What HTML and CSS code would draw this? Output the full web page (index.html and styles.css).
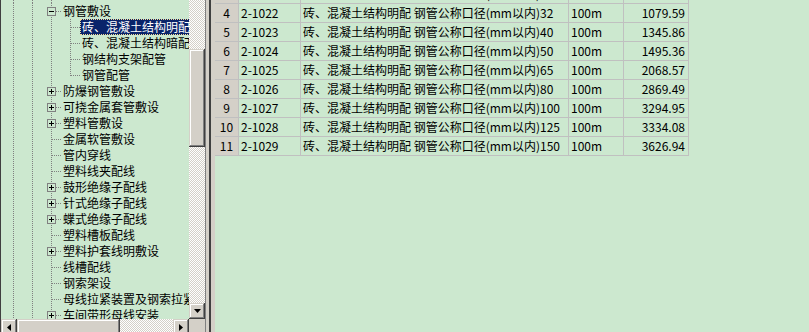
FILE: index.html
```html
<!DOCTYPE html>
<html lang="zh-CN">

<head>
    <meta charset="UTF-8" />
    <meta name="viewport" content="width=device-width, initial-scale=1.0" />
    <title>定额库</title>
    <link rel="stylesheet" href="styles.css">
</head>

<body>
    <div class="app">
        <!-- 左侧: 章节树 -->
        <div class="tree-pane">
            <div class="tree-body">
                <div class="tree">
                    <div class="node spacer"><i class="guide"></i><i class="guide"></i><i class="guide"></i></div>
                    <div class="node"><i class="guide"></i><i class="guide"></i><i class="joint"><b class="box"></b></i><span class="label">钢管敷设</span></div>
                    <div class="node"><i class="guide"></i><i class="guide"></i><i class="guide"></i><i class="joint"></i><span class="label selected">砖、混凝土结构明配管</span></div>
                    <div class="node"><i class="guide"></i><i class="guide"></i><i class="guide"></i><i class="joint"></i><span class="label">砖、混凝土结构暗配管</span></div>
                    <div class="node"><i class="guide"></i><i class="guide"></i><i class="guide"></i><i class="joint"></i><span class="label">钢结构支架配管</span></div>
                    <div class="node"><i class="guide"></i><i class="guide"></i><i class="guide"></i><i class="joint last"></i><span class="label">钢管配管</span></div>
                    <div class="node"><i class="guide"></i><i class="guide"></i><i class="joint"><b class="box plus"></b></i><span class="label">防爆钢管敷设</span></div>
                    <div class="node"><i class="guide"></i><i class="guide"></i><i class="joint"><b class="box plus"></b></i><span class="label">可挠金属套管敷设</span></div>
                    <div class="node"><i class="guide"></i><i class="guide"></i><i class="joint"><b class="box plus"></b></i><span class="label">塑料管敷设</span></div>
                    <div class="node"><i class="guide"></i><i class="guide"></i><i class="joint"></i><span class="label">金属软管敷设</span></div>
                    <div class="node"><i class="guide"></i><i class="guide"></i><i class="joint"></i><span class="label">管内穿线</span></div>
                    <div class="node"><i class="guide"></i><i class="guide"></i><i class="joint"></i><span class="label">塑料线夹配线</span></div>
                    <div class="node"><i class="guide"></i><i class="guide"></i><i class="joint"><b class="box plus"></b></i><span class="label">鼓形绝缘子配线</span></div>
                    <div class="node"><i class="guide"></i><i class="guide"></i><i class="joint"><b class="box plus"></b></i><span class="label">针式绝缘子配线</span></div>
                    <div class="node"><i class="guide"></i><i class="guide"></i><i class="joint"><b class="box plus"></b></i><span class="label">蝶式绝缘子配线</span></div>
                    <div class="node"><i class="guide"></i><i class="guide"></i><i class="joint"></i><span class="label">塑料槽板配线</span></div>
                    <div class="node"><i class="guide"></i><i class="guide"></i><i class="joint"><b class="box plus"></b></i><span class="label">塑料护套线明敷设</span></div>
                    <div class="node"><i class="guide"></i><i class="guide"></i><i class="joint"></i><span class="label">线槽配线</span></div>
                    <div class="node"><i class="guide"></i><i class="guide"></i><i class="joint"></i><span class="label">钢索架设</span></div>
                    <div class="node"><i class="guide"></i><i class="guide"></i><i class="joint"></i><span class="label">母线拉紧装置及钢索拉紧装置</span></div>
                    <div class="node"><i class="guide"></i><i class="guide"></i><i class="joint"><b class="box plus"></b></i><span class="label">车间带形母线安装</span></div>
                </div>

                <div class="vscroll">
                    <div class="track upper"></div>
                    <div class="raised thumb"></div>
                    <div class="track"></div>
                    <div class="raised btn">
                        <svg width="7" height="4" viewBox="0 0 7 4"><path d="M0 0h7L3.5 4z" fill="#000" /></svg>
                    </div>
                </div>
            </div>

            <div class="hscroll">
                <div class="raised btn">
                    <svg width="4" height="7" viewBox="0 0 4 7"><path d="M4 0v7L0 3.5z" fill="#000" /></svg>
                </div>
                <div class="raised hthumb"></div>
                <div class="track"></div>
                <div class="raised btn">
                    <svg width="4" height="7" viewBox="0 0 4 7"><path d="M0 0v7L4 3.5z" fill="#000" /></svg>
                </div>
                <div class="corner"></div>
            </div>
        </div>

        <div class="splitter"></div>

        <!-- 右侧: 定额列表 -->
        <div class="grid-pane">
            <div class="grid">
                <div class="row"><div class="cell no">3</div><div class="cell code">2-1021</div><div class="cell name">砖、混凝土结构明配 钢管公称口径(mm以内)25</div><div class="cell unit">100m</div><div class="cell price">868.23</div></div>
                <div class="row"><div class="cell no">4</div><div class="cell code">2-1022</div><div class="cell name">砖、混凝土结构明配 钢管公称口径(mm以内)32</div><div class="cell unit">100m</div><div class="cell price">1079.59</div></div>
                <div class="row"><div class="cell no">5</div><div class="cell code">2-1023</div><div class="cell name">砖、混凝土结构明配 钢管公称口径(mm以内)40</div><div class="cell unit">100m</div><div class="cell price">1345.86</div></div>
                <div class="row"><div class="cell no">6</div><div class="cell code">2-1024</div><div class="cell name">砖、混凝土结构明配 钢管公称口径(mm以内)50</div><div class="cell unit">100m</div><div class="cell price">1495.36</div></div>
                <div class="row"><div class="cell no">7</div><div class="cell code">2-1025</div><div class="cell name">砖、混凝土结构明配 钢管公称口径(mm以内)65</div><div class="cell unit">100m</div><div class="cell price">2068.57</div></div>
                <div class="row"><div class="cell no">8</div><div class="cell code">2-1026</div><div class="cell name">砖、混凝土结构明配 钢管公称口径(mm以内)80</div><div class="cell unit">100m</div><div class="cell price">2869.49</div></div>
                <div class="row"><div class="cell no">9</div><div class="cell code">2-1027</div><div class="cell name">砖、混凝土结构明配 钢管公称口径(mm以内)100</div><div class="cell unit">100m</div><div class="cell price">3294.95</div></div>
                <div class="row"><div class="cell no">10</div><div class="cell code">2-1028</div><div class="cell name">砖、混凝土结构明配 钢管公称口径(mm以内)125</div><div class="cell unit">100m</div><div class="cell price">3334.08</div></div>
                <div class="row"><div class="cell no">11</div><div class="cell code">2-1029</div><div class="cell name">砖、混凝土结构明配 钢管公称口径(mm以内)150</div><div class="cell unit">100m</div><div class="cell price">3626.94</div></div>
            </div>
        </div>
    </div>
</body>

</html>
```

FILE: styles.css
```css
body {
    margin: 0;
    width: 809px;
    height: 332px;
    overflow: hidden;
    background: #cce8cf;
    font-family: "Noto Sans CJK SC", "Liberation Sans", sans-serif;
    font-size: 12px;
    color: #000;
}

.app {
    display: flex;
    height: 332px;
}

/* 左侧树 */
.tree-pane {
    width: 204px;
    flex: 0 0 204px;
    border-left: 1px solid #404040;
    display: flex;
    flex-direction: column;
}

.tree-body {
    height: 319px;
    flex: 0 0 319px;
    display: flex;
}

.tree {
    width: 188px;
    overflow: hidden;
}

.node {
    display: flex;
    height: 16px;
}

.node.spacer {
    height: 3px;
}

.node i {
    display: block;
    flex: 0 0 auto;
    height: 100%;
}

/* 竖向虚线 */
.guide {
    width: 19px;
    background: repeating-linear-gradient(#808080 0 1px, transparent 1px 2px) 12px 0 / 1px 100% no-repeat;
}

.joint {
    width: 22px;
    background:
        repeating-linear-gradient(to right, #808080 0 1px, transparent 1px 2px) 13px 8px / 9px 1px no-repeat,
        repeating-linear-gradient(#808080 0 1px, transparent 1px 2px) 12px 0 / 1px 100% no-repeat;
}

.joint.last {
    background:
        repeating-linear-gradient(to right, #808080 0 1px, transparent 1px 2px) 13px 8px / 9px 1px no-repeat,
        repeating-linear-gradient(#808080 0 1px, transparent 1px 2px) 12px 0 / 1px 9px no-repeat;
}

.box {
    display: block;
    width: 9px;
    height: 9px;
    margin: 4px 0 0 8px;
    box-sizing: border-box;
    border: 1px solid #808080;
    background: linear-gradient(#000, #000) 1px 3px / 5px 1px no-repeat, #cce8cf;
}

.box.plus {
    background:
        linear-gradient(#000, #000) 1px 3px / 5px 1px no-repeat,
        linear-gradient(#000, #000) 3px 1px / 1px 5px no-repeat,
        #cce8cf;
}

.label {
    height: 16px;
    line-height: 16px;
    padding: 0 2px;
    white-space: nowrap;
}

.label.selected {
    background: #0a246a;
    color: #fff;
    outline: 1px dotted #f5db95;
    outline-offset: -1px;
}

/* 滚动条 */
.track {
    flex: 1;
    background: repeating-conic-gradient(#d4d0c8 0 25%, #fff 0 50%) 0 0 / 2px 2px;
}

.raised {
    background: #d4d0c8;
    box-sizing: border-box;
    box-shadow: inset -1px -1px #404040, inset 1px 1px #d4d0c8, inset -2px -2px #808080, inset 2px 2px #fff;
}

.vscroll {
    width: 16px;
    display: flex;
    flex-direction: column;
}

.vscroll .track.upper {
    flex: 0 0 49px;
}

.thumb {
    height: 98px;
}

.btn {
    flex: 0 0 16px;
    height: 16px;
    display: flex;
    align-items: center;
    justify-content: center;
}

.btn svg {
    display: block;
}

.hscroll {
    height: 16px;
    flex: 0 0 16px;
    display: flex;
}

.hthumb {
    width: 103px;
}

.corner {
    width: 16px;
    background: #d4d0c8;
}

.splitter {
    flex: 0 0 10px;
    background: linear-gradient(to right, #808080 0 1px, #d4d0c8 1px 4px, #404040 4px 6px, #d4d0c8 6px 10px);
}

/* 右侧列表 */
.grid-pane {
    flex: 1;
    overflow: hidden;
}

.grid {
    margin-top: -15px;
}

.row {
    display: flex;
    height: 19px;
}

.cell {
    box-sizing: border-box;
    height: 19px;
    line-height: 18px;
    border-right: 1px solid #c0c0c0;
    border-bottom: 1px solid #c0c0c0;
    padding: 0 2px;
    white-space: nowrap;
    overflow: hidden;
}

.cell.no {
    width: 24px;
    padding: 0;
    text-align: center;
    background: #d4d0c8;
}

.cell.code {
    width: 62px;
}

.cell.name {
    width: 268px;
}

.cell.unit {
    width: 55px;
}

.cell.price {
    width: 65px;
    padding-right: 3px;
    text-align: right;
}
```
